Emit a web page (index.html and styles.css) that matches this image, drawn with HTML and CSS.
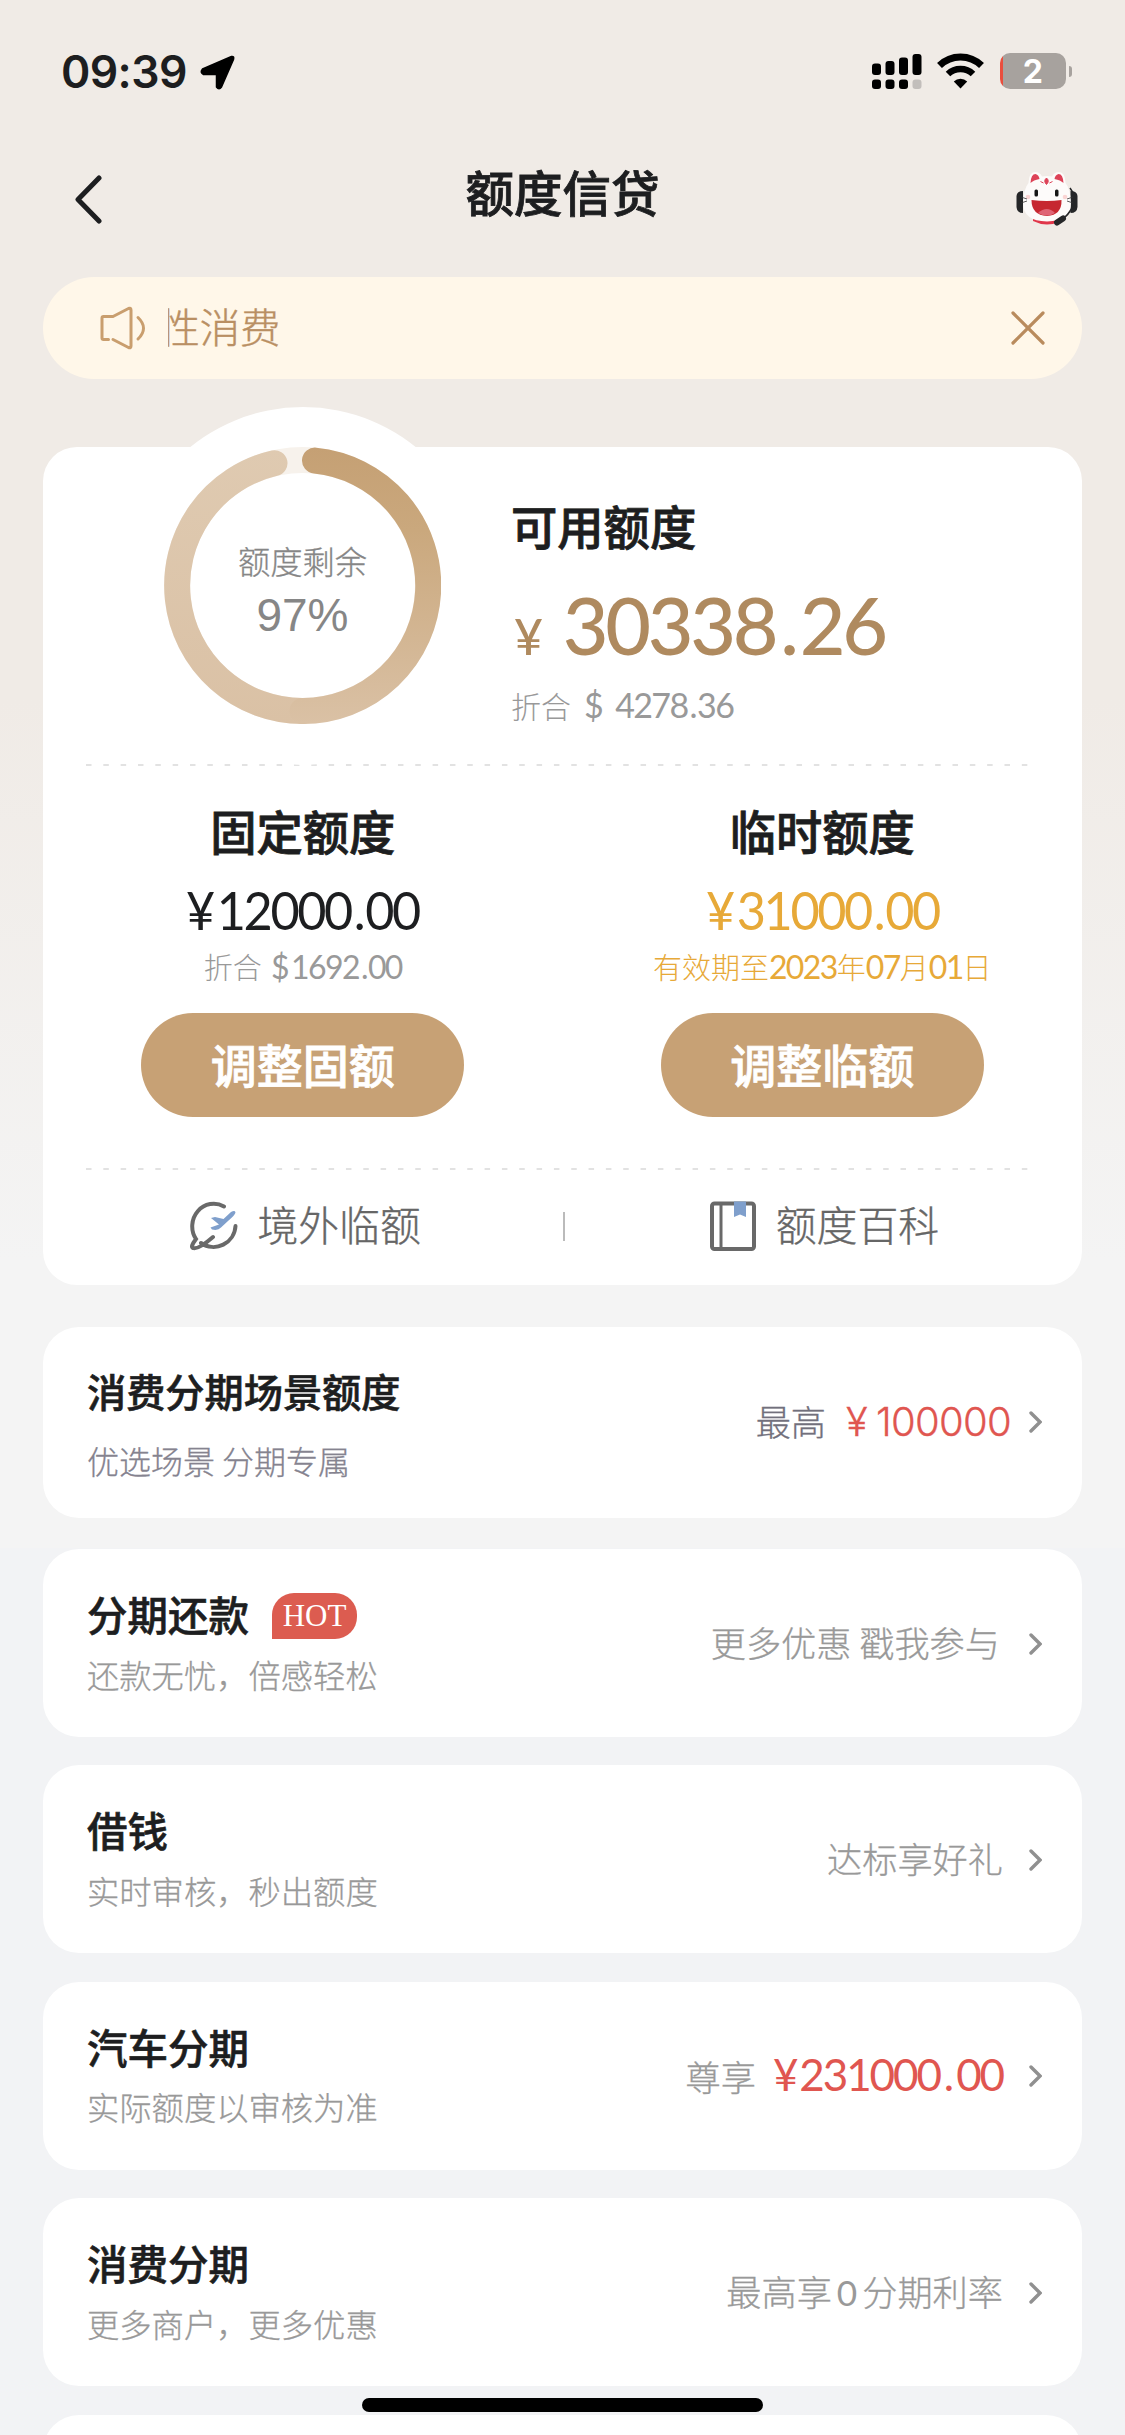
FILE: index.html
```html
<!DOCTYPE html>
<html lang="zh-CN">
<head>
<meta charset="utf-8">
<title>额度信贷</title>
<link rel="stylesheet" href="styles.css">
</head>
<body>
<div class="page">
  <div class="status">
    <span class="status-time">09:39</span>
    <svg class="status-loc" width="35" height="35" viewBox="0 0 35 35"><path d="M31.500 1.500 Q34.500 1 33.500 4.500 L21.500 32 Q19 35.500 16.500 32 V19.500 H3.500 Q-0.500 17.500 2.500 14 Z" stroke="#000" stroke-width="1.500" stroke-linejoin="round"/></svg>
    <div class="status-right">
      <svg width="50" height="36" viewBox="0 0 50 36">
        <rect x="0" y="10.500" width="9" height="11.500" rx="3"/><rect x="13.500" y="8" width="9" height="14" rx="3"/><rect x="27" y="4.500" width="9" height="17.500" rx="3"/><rect x="40.500" y="1" width="9" height="21" rx="3"/>
        <rect x="0" y="26.500" width="9" height="9.500" rx="3"/><rect x="13.500" y="26.500" width="9" height="9.500" rx="3"/><rect x="27" y="26.500" width="9" height="9.500" rx="3"/><rect x="40.500" y="26.500" width="9" height="9.500" rx="3" fill="#c2bebb"/>
      </svg>
      <svg class="wifi" width="47" height="36" viewBox="0 0 47 36">
        <path d="M2.500 12.500 A30 30 0 0 1 44.500 12.500" fill="none" stroke="#000" stroke-width="7"/>
        <path d="M11 21 A18 18 0 0 1 36 21" fill="none" stroke="#000" stroke-width="6.500"/>
        <path d="M23.500 35.500 L16.800 28.500 A9.500 9.500 0 0 1 30.200 28.500 Z"/>
      </svg>
      <div class="battery"><span class="battery-body">2</span><span class="battery-nub"></span></div>
    </div>
  </div>

  <header class="nav">
    <svg class="nav-back" width="27" height="49" viewBox="0 0 27 49"><path d="M24 3 L3 24.500 L24 46" fill="none" stroke="#1d1e20" stroke-width="5" stroke-linecap="round" stroke-linejoin="round"/></svg>
    <h1 class="nav-title">额度信贷</h1>
    <svg class="nav-service" width="62" height="56" viewBox="0 0 62 56">
      <path d="M17 50 Q31 57 45 50 V46 H17 Z" fill="#e0364a"/>
      <path d="M0.500 25 Q1 20 7 20 V42 Q1 42 0.500 36 Z" fill="#252628"/>
      <path d="M61.500 25 Q61 20 54.500 20 V42 Q61 42 61.500 36 Z" fill="#252628"/>
      <path d="M7 32 Q8 17 12.500 12 Q13 1 19 1 Q24 1 26 5.500 Q31 4.500 36 5.500 Q38 1 43 1 Q49 1 49.500 12 Q54 17 55 32 Q55 50 31 50.500 Q7 50 7 32 Z" fill="#fdfbfa"/>
      <path d="M14.500 12 Q15 3 19.500 3 Q23 4 23.500 8 Q17.500 9 14.500 12 Z" fill="#dd4257"/>
      <path d="M47.500 12 Q47 3 42.500 3 Q39 4 38.500 8 Q44.500 9 47.500 12 Z" fill="#dd4257"/>
      <path d="M30.500 7 Q34 10 30.500 13.500 Q27 10 30.500 7 Z M24.500 10.500 L27.500 12 M36.500 10.500 L33.500 12" fill="#dd4257" stroke="#dd4257"/>
      <rect x="18.500" y="18.500" width="3.500" height="7" rx="1.500" fill="#161616"/><rect x="39" y="18.500" width="3.500" height="7" rx="1.500" fill="#161616"/>
      <circle cx="12" cy="26" r="2.300" fill="#fad5d4"/><circle cx="49" cy="26" r="2.300" fill="#fad5d4"/>
      <path d="M5 26 L11 28 M5 32 L11 30 M57 26 L51 28 M57 32 L51 30" stroke="#333" stroke-width="0.800"/>
      <path d="M15.500 29 Q31 31 45.500 29 Q46 44 31 45 Q15.500 44 15.500 29 Z" fill="#c62730"/>
      <path d="M22 42 Q31 34 39 42 Q31 47 22 42 Z" fill="#df6475"/>
      <path d="M54 17 Q60 24 57 36 Q52 44 46 49" fill="none" stroke="#252628" stroke-width="1.600"/>
      <path d="M47 47.500 L41 51.500" stroke="#252628" stroke-width="6" stroke-linecap="round"/>
    </svg>
  </header>

  <div class="notice">
    <svg class="notice-icon" width="46" height="44" viewBox="0 0 46 44" fill="none" stroke="#c99e6e" stroke-width="3" stroke-linecap="round" stroke-linejoin="round">
      <path d="M8.500 33.500 H3.500 Q2 33.500 2 32 V12 Q2 10.500 3.500 10.500 H13 L28.500 2.500 Q31 1.500 31 4 V40 Q31 42.500 28.500 41.500 L13 33.500"/>
      <path d="M38 11.500 Q49 22 38 33"/>
    </svg>
    <div class="notice-window"><span class="notice-text">性消费</span></div>
    <svg class="notice-close" width="34" height="34" viewBox="0 0 34 34"><path d="M2 2 L32 32 M32 2 L2 32" stroke="#b98b5d" stroke-width="3.200" stroke-linecap="round"/></svg>
  </div>

  <section class="card">
    <div class="overview">
      <div class="ring">
        <svg class="ring-svg" width="277" height="277" viewBox="-138.500 -138.500 277 277" fill="none">
          <defs>
            <linearGradient id="gr" x1="0" y1="-138" x2="0" y2="138" gradientUnits="userSpaceOnUse"><stop offset="0" stop-color="#c5a074"/><stop offset=".3" stop-color="#caa87d"/><stop offset="1" stop-color="#dac1a5"/></linearGradient>
            <linearGradient id="gl" x1="0" y1="-138" x2="0" y2="138" gradientUnits="userSpaceOnUse"><stop offset="0" stop-color="#dfcab1"/><stop offset="1" stop-color="#dac1a5"/></linearGradient>
          </defs>
          <circle r="125.500" stroke="#f7f2ec" stroke-width="26"/>
          <path d="M0 125.500 A125.500 125.500 0 0 1 -28 -122.300" stroke="url(#gl)" stroke-width="26" stroke-linecap="round"/>
          <path d="M12.500 -124.900 A125.500 125.500 0 0 1 0 125.500" stroke="url(#gr)" stroke-width="26" stroke-linecap="round"/>
        </svg>
        <div class="ring-label"><span class="ring-name">额度剩余</span><span class="ring-value">97%</span></div>
      </div>
      <div class="available">
        <h2 class="available-title">可用额度</h2>
        <div class="available-amount"><span class="yen">¥</span>30338<i class="dot">.</i>26</div>
        <div class="available-usd">折合<span class="num">$</span><span class="num">4278<i class="dot">.</i>36</span></div>
      </div>
    </div>
    <svg class="dash" width="942" height="2" viewBox="0 0 942 2"><path d="M0 1 H942" stroke="#e2e2e2" stroke-width="2" stroke-dasharray="5.500 11.830"/></svg>
    <div class="limits">
      <div class="limit">
        <h2 class="limit-title">固定额度</h2>
        <div class="limit-amount"><i class="cur">¥</i>12000<i class="dot">.</i>00</div>
        <div class="limit-note">折合 <span class="num"><i class="cur">$</i>1692<i class="dot">.</i>00</span></div>
        <button class="limit-btn">调整固额</button>
      </div>
      <div class="limit limit-temp">
        <h2 class="limit-title">临时额度</h2>
        <div class="limit-amount"><i class="cur">¥</i>31000<i class="dot">.</i>00</div>
        <div class="limit-note">有效期至<span class="num">2023</span>年<span class="num">07</span>月<span class="num">01</span>日</div>
        <button class="limit-btn">调整临额</button>
      </div>
    </div>
    <svg class="dash" width="942" height="2" viewBox="0 0 942 2"><path d="M0 1 H942" stroke="#e2e2e2" stroke-width="2" stroke-dasharray="5.500 11.830"/></svg>
    <div class="links">
      <div class="link">
        <svg width="48" height="50" viewBox="0 0 48 50" fill="none">
          <path d="M34 5.500 A21.500 22.500 0 0 0 6 38 Q0 46 3 47 Q8 49 23 36 M11 42 A22 22 0 0 0 45.500 25" stroke="#696969" stroke-width="4" stroke-linecap="round"/>
          <path d="M21 17 L25 16 L33.500 18 L41 11 Q45 9 45.500 11.500 Q45 14 38 20 L31 26.500 Q28 30 22 28.500 L20.500 26.500 L29 23.500 Z" fill="#7f9fcc"/>
        </svg>
        <span>境外临额</span>
      </div>
      <i class="links-divider"></i>
      <div class="link">
        <svg width="46" height="50" viewBox="0 0 46 50" fill="none">
          <rect x="2" y="2.500" width="42" height="45.500" rx="2.500" stroke="#696969" stroke-width="4"/>
          <path d="M11 2 V48" stroke="#696969" stroke-width="3"/>
          <path d="M24 0.500 H36 V16 L30 13.500 L24 16 Z" fill="#7f9fcc"/>
        </svg>
        <span>额度百科</span>
      </div>
    </div>
  </section>

  <section class="row row-scene">
    <div class="row-main"><h3 class="row-title">消费分期场景额度</h3><p class="row-sub">优选场景 分期专属</p></div>
    <div class="row-side"><span>最高</span><span class="price-plain"><span class="price-yen">¥</span>100000</span></div>
    <svg class="chev" width="13" height="22" viewBox="0 0 13 22"><path d="M2 2 L11 11 L2 20" fill="none" stroke="#909090" stroke-width="3.400" stroke-linecap="round"/></svg>
  </section>

  <div class="list">
    <section class="row">
      <div class="row-main"><h3 class="row-title">分期还款<span class="hot">HOT</span></h3><p class="row-sub">还款无忧，倍感轻松</p></div>
      <div class="row-side row-side-invite">更多优惠 戳我参与</div>
      <svg class="chev" width="13" height="22" viewBox="0 0 13 22"><path d="M2 2 L11 11 L2 20" fill="none" stroke="#909090" stroke-width="3.400" stroke-linecap="round"/></svg>
    </section>
    <section class="row">
      <div class="row-main"><h3 class="row-title">借钱</h3><p class="row-sub">实时审核，秒出额度</p></div>
      <div class="row-side">达标享好礼</div>
      <svg class="chev" width="13" height="22" viewBox="0 0 13 22"><path d="M2 2 L11 11 L2 20" fill="none" stroke="#909090" stroke-width="3.400" stroke-linecap="round"/></svg>
    </section>
    <section class="row">
      <div class="row-main"><h3 class="row-title">汽车分期</h3><p class="row-sub">实际额度以审核为准</p></div>
      <div class="row-side"><span class="tight">尊享</span><span class="price"><i class="cur">¥</i>231000<i class="dot">.</i>00</span></div>
      <svg class="chev" width="13" height="22" viewBox="0 0 13 22"><path d="M2 2 L11 11 L2 20" fill="none" stroke="#909090" stroke-width="3.400" stroke-linecap="round"/></svg>
    </section>
    <section class="row">
      <div class="row-main"><h3 class="row-title">消费分期</h3><p class="row-sub">更多商户，更多优惠</p></div>
      <div class="row-side">最高享<span class="zero">0</span>分期利率</div>
      <svg class="chev" width="13" height="22" viewBox="0 0 13 22"><path d="M2 2 L11 11 L2 20" fill="none" stroke="#909090" stroke-width="3.400" stroke-linecap="round"/></svg>
    </section>
    <section class="row"></section>
  </div>
  <div class="home-bar"></div>
</div>
</body>
</html>
```

FILE: styles.css
```css
* { box-sizing: border-box; margin: 0; padding: 0; }
body { font-family: "Noto Sans CJK SC", sans-serif; color: #1d1e20; }
svg { display: block; flex: none; }
i { font-style: normal; }

.page {
  position: relative;
  width: 1125px;
  height: 2435px;
  overflow: hidden;
  background: linear-gradient(#f0ebe6 0, #f0ebe6 700px, #f4f4f4 1260px, #f4f4f4 1548.500px, #f2f3f5 1548.500px);
}

.status { display: flex; height: 144px; padding: 53px 53px 0 61px; }
.status-time { font: 600 44.500px/38px Inter, sans-serif; width: 139px; letter-spacing: -0.600px; }
.status-loc { margin-top: 2px; }
.status-right { display: flex; margin-left: auto; }
.wifi { margin: 0 16px 0 15.500px; }
.battery { display: flex; align-items: center; height: 36px; gap: 3px; }
.battery-body {
  width: 65.500px; height: 36px; border-radius: 10px;
  background: linear-gradient(90deg, #ea4e3d 3px, #a7a29e 3px);
  color: #fff; text-align: center; font: 700 32px/37px Inter, sans-serif;
}
.battery-nub { width: 3.500px; height: 11px; border-radius: 0 5px 5px 0; background: #a7a29e; }

.nav { display: flex; height: 132.500px; padding: 27px 47px 0 75px; justify-content: space-between; }
.nav-back { margin-top: 4px; }
.nav-title { font-size: 48.500px; line-height: 48px; font-weight: 500; margin: -4px 0 0 7px; -webkit-text-stroke: 0.800px; }

.notice {
  display: flex; align-items: center; height: 102px; margin: 0 43px; padding: 0 37px 0 57px;
  border-radius: 51px; background: #fff7e9;
}
.notice-window { width: 800px; margin-left: 22px; overflow: hidden; }
.notice-text {
  display: block; margin: -4px 0 0 -8.500px; font-size: 40.500px; line-height: 60px; letter-spacing: -0.300px;
  color: #b98f63; font-weight: 300; -webkit-text-stroke: 0.400px;
}
.notice-close { margin-left: auto; }

.card { height: 837.500px; margin: 68.500px 43px 0; border-radius: 34px; background: #fff; }
.overview { display: flex; height: 317px; }
.ring { position: relative; width: 277px; height: 277px; margin-left: 121px; }
.ring::before { content: ""; position: absolute; inset: -40.500px; border-radius: 50%; background: #fff; }
.ring-svg { position: relative; }
.ring-label {
  position: absolute; inset: 0; display: flex; flex-direction: column; align-items: center;
  padding-top: 91px; color: #868686;
}
.ring-name { font-size: 32.300px; line-height: 44px; font-weight: 300; -webkit-text-stroke: 0.300px; }
.ring-value { font: 400 46px/56px "Liberation Sans", sans-serif; margin-top: 5px; }
.available { margin-left: 70px; padding-top: 48px; white-space: nowrap; }
.available-title, .limit-title { font-size: 46.300px; line-height: 60px; font-weight: 500; -webkit-text-stroke: 0.800px; }
.available-amount { font: 500 79px/80px Lato, sans-serif; margin-top: 30px; letter-spacing: -3.300px; color: #af8a5f; }
.available-amount .dot { margin: 0 4px 0 5px; }
.yen { font-size: 50px; line-height: 1; margin: 0 23px 0 3px; }
.available-usd { font-size: 30px; line-height: 40px; font-weight: 300; margin-top: 20px; color: #999; }
.num { font-family: Lato, sans-serif; font-weight: 400; letter-spacing: -1.600px; line-height: 1; }
.available-usd .num { font-size: 34px; margin-left: 13px; }
.num .dot { margin: 0 1px 0 2px; }

.dash { margin: 0 43px; }
.limits { display: flex; height: 402px; padding-top: 34px; }
.limit { flex: 1; display: flex; flex-direction: column; align-items: center; white-space: nowrap; }
.limit-amount { font: 400 53px/60px Lato, sans-serif; letter-spacing: -2.500px; margin-top: 20px; transform: scaleX(.95); }
.limit-amount .cur { margin-right: 4px; }
.limit-amount .dot { margin: 0 2px 0 3px; }
.limit-note { font-size: 29px; line-height: 40px; font-weight: 300; margin-top: 6px; color: #999; }
.limit-note .num { font-size: 32px; }
.limit-note .cur { margin: 0 3px; }
.limit-temp .limit-amount, .limit-temp .limit-note { color: #e7a938; }
.limit-btn {
  width: 323px; height: 103.500px; margin-top: 27px; border: 0; border-radius: 52px; padding-bottom: 4px;
  background: #c7a175; color: #fff; font: 500 46px/90px "Noto Sans CJK SC", sans-serif; -webkit-text-stroke: 0.800px;
}
.links { display: flex; align-items: center; justify-content: space-between; padding: 31px 143px 0 146.500px; }
.link {
  display: flex; align-items: center; gap: 20px; font-size: 40.800px; line-height: 50px;
  color: #666; font-weight: 300; -webkit-text-stroke: 0.400px;
}
.link span { margin-top: -5px; }
.links-divider { width: 2px; height: 29px; margin-left: -3px; background: #bbb; }

.row {
  display: flex; height: 187.600px; margin: 0 43px; padding: 0 40px 0 44px;
  border-radius: 36px; background: #fff;
}
.row-main { padding-top: 39px; }
.row-title {
  display: flex; align-items: center; font-size: 40.500px; line-height: 52px; height: 52px;
  font-weight: 500; -webkit-text-stroke: 0.600px;
}
.row-sub { font-size: 32.300px; line-height: 44px; margin-top: 11.500px; font-weight: 300; color: #999; -webkit-text-stroke: 0.300px; }
.row-side {
  display: flex; align-items: baseline; align-self: flex-start; margin: 68.500px 26px 0 auto;
  font-size: 35.200px; line-height: 48px; font-weight: 300; color: #999; white-space: pre; -webkit-text-stroke: 0.300px;
}
.row-side-invite { margin-right: 29px; }
.chev { margin-top: 83.500px; }
.hot {
  height: 46px; width: 85px; margin: 4px 0 0 23px; border-radius: 22px 22px 22px 0; background: #dc5c50;
  color: #fff; text-align: center; font: 400 31px/46px "Liberation Serif", serif; -webkit-text-stroke: 0;
}
.price { font: 400 44px/48px Lato, sans-serif; letter-spacing: -2.100px; color: #e05650; margin-left: 17px; -webkit-text-stroke: 0; }
.price .cur { margin-right: 3px; }
.price .dot { margin: 0 4px; }
.price-plain { font: 300 40px/48px Inter, sans-serif; letter-spacing: -0.700px; color: #e05650; margin-left: 20px; }
.price-yen { margin-right: 9px; }
.zero { font-family: Lato, sans-serif; margin: 0 5px; font-weight: 400; -webkit-text-stroke: 0; }

.row-scene { height: 191px; margin-top: 42.500px; }
.row-scene .row-main { padding-top: 37px; }
.row-scene .row-title { font-size: 39.200px; }
.row-scene .row-sub { font-size: 32px; margin-top: 22px; color: #85838f; }
.row-scene .row-side { color: #72707c; margin: 70px 18px 0 auto; }
.row-scene .chev { margin-top: 84px; }
.list { display: flex; flex-direction: column; gap: 28.900px; margin-top: 31px; }
.home-bar { position: absolute; left: 362px; top: 2397.500px; width: 401px; height: 14px; border-radius: 7px; background: #000; }
```
